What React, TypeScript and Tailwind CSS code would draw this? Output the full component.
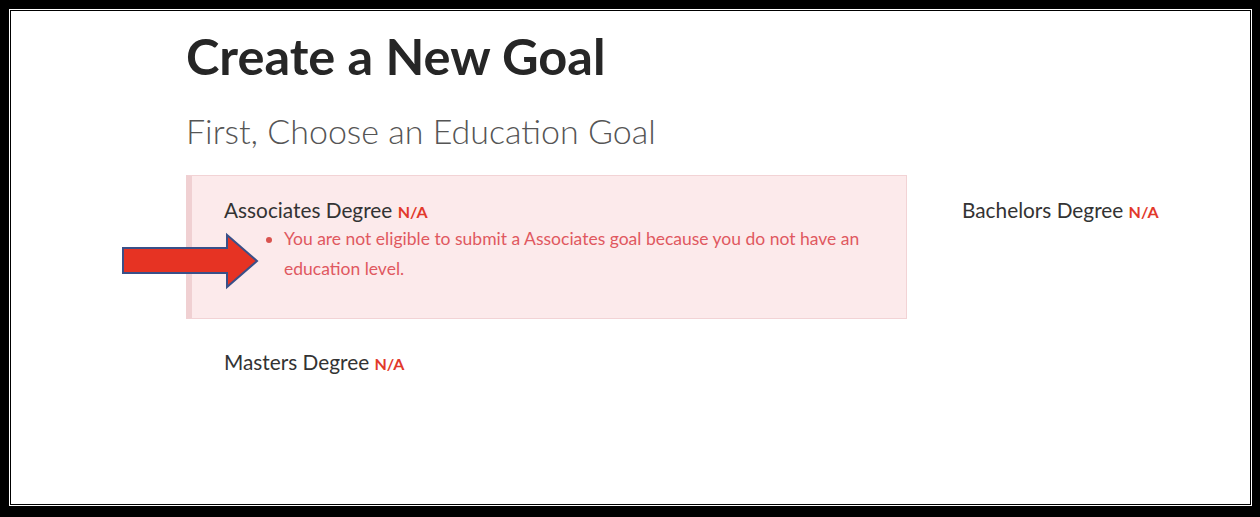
import React from "react";

function Arrow() {
  return (
    <svg width="150" height="60" viewBox="0 0 150 60" className="absolute left-[101px] top-[221px]">
      <polygon
        points="11,16 115,16 115,3 145,29 115,55 115,41 11,41"
        fill="#e63323"
        stroke="#3a5088"
        strokeWidth="2"
        strokeLinejoin="miter"
      />
    </svg>
  );
}

function Degree({ name }: { name: string }) {
  return (
    <div className="text-[20.8px] leading-[28px] text-[#333]">
      {name} <span className="text-[16px] font-bold text-[#e2392b]">N/A</span>
    </div>
  );
}

export default function App() {
  return (
    <div className="w-[1260px] h-[517px] bg-black pt-[9px] pl-[9px] pr-[8px] pb-[11px] font-['Lato',sans-serif]">
      <div className="h-full w-full border border-white">
        <div className="relative h-full w-full border border-black bg-white pl-[175px] pt-[14px]">
          <h1 className="text-[50.5px] font-bold text-[#262626] leading-[62px]">Create a New Goal</h1>
          <h2 className="mt-[22px] text-[34px] font-light text-[#555] leading-[44px]">
            First, Choose an Education Goal
          </h2>
          <div className="mt-[22px] grid grid-cols-[721px_1fr] gap-x-[17px] gap-y-[8px]">
            <div className="h-[144px] border border-[#f2d3d5] border-l-[6px] border-l-[#f0d0d2] bg-[#fceaeb] pl-[32px] pr-[30px] pt-[20px]">
              <Degree name="Associates Degree" />
              <ul className="mt-[-2px] list-disc pl-[60px] text-[17.5px] leading-[30px] text-[#e0585f] marker:text-[#d9534f]">
                <li>
                  You are not eligible to submit a Associates goal because you do not have an education level.
                </li>
              </ul>
            </div>
            <div className="pl-[38px] pt-[21px]">
              <Degree name="Bachelors Degree" />
            </div>
            <div className="pl-[38px] pt-[21px]">
              <Degree name="Masters Degree" />
            </div>
          </div>
          <Arrow />
        </div>
      </div>
    </div>
  );
}
